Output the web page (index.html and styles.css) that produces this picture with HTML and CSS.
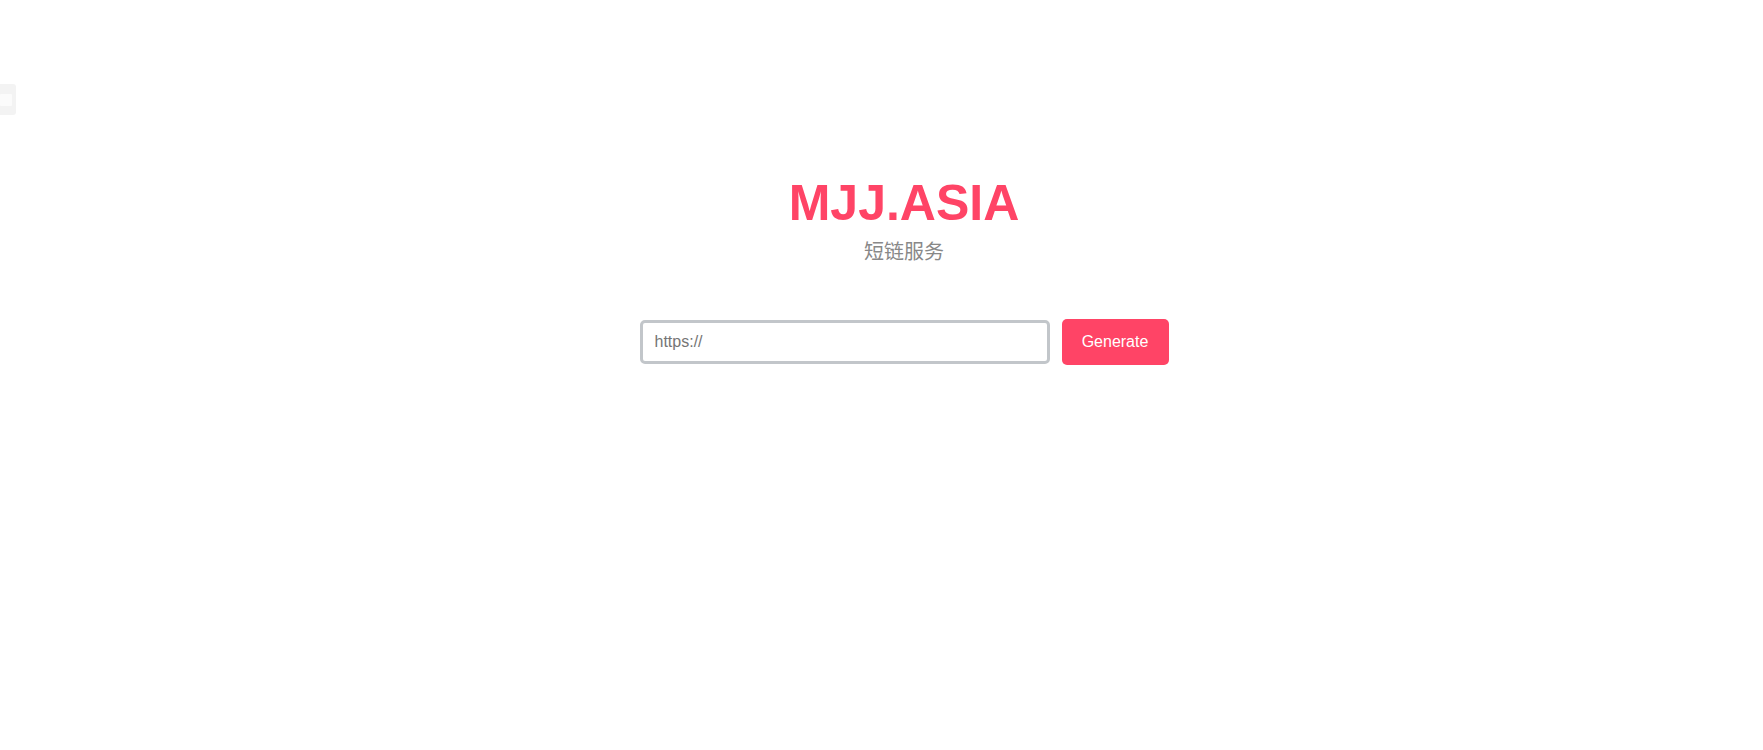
FILE: index.html
```html
<!DOCTYPE html>
<html lang="zh">
<head>
<meta charset="utf-8">
<title>MJJ.ASIA 短链服务</title>
<link rel="stylesheet" href="styles.css">
</head>
<body>
<div class="side-toggle"><span class="side-toggle-inner"></span></div>
<main class="page">
  <header class="brand">
    <h1 class="brand-title">MJJ.ASIA</h1>
    <p class="brand-sub">短链服务</p>
  </header>
  <form class="shorten">
    <input class="shorten-input" type="text" placeholder="https://">
    <button class="shorten-btn" type="button">Generate</button>
  </form>
</main>
</body>
</html>
```

FILE: styles.css
```css
html, body {
  margin: 0;
  padding: 0;
  background: #ffffff;
}
body {
  font-family: "Liberation Sans", Arial, sans-serif;
}
.side-toggle {
  position: fixed;
  left: 0;
  top: 84px;
  width: 16px;
  height: 31px;
  background: #f3f3f3;
  border-radius: 0 3px 3px 0;
  display: flex;
  align-items: center;
}
.side-toggle-inner {
  display: block;
  width: 12px;
  height: 12px;
  background: #fbfbfb;
  border-radius: 1px;
}
.page {
  display: flex;
  flex-direction: column;
  align-items: center;
  padding-top: 174px;
  padding-left: 45px;
}
.brand {
  display: flex;
  flex-direction: column;
  align-items: center;
}
.brand-title {
  margin: 0;
  font-family: "Liberation Sans", Arial, sans-serif;
  font-weight: 700;
  font-size: 50px;
  line-height: 58px;
  color: #ff4466;
}
.brand-sub {
  margin: 6px 0 0;
  font-family: "Noto Sans CJK SC", sans-serif;
  font-size: 20px;
  line-height: 26px;
  color: #888888;
}
.shorten {
  display: flex;
  align-items: center;
  gap: 12px;
  margin-top: 55px;
}
.shorten-input {
  box-sizing: border-box;
  width: 410px;
  height: 44px;
  border: 3px solid #c2c6ca;
  border-radius: 5px;
  padding: 0 12px;
  font-family: "Liberation Sans", Arial, sans-serif;
  font-size: 16px;
  color: #333;
  outline: none;
}
.shorten-input::placeholder {
  color: #757575;
}
.shorten-btn {
  box-sizing: border-box;
  width: 107px;
  height: 46px;
  border: none;
  border-radius: 5px;
  background: #ff4466;
  color: #ffffff;
  font-family: "Liberation Sans", Arial, sans-serif;
  font-size: 16px;
  cursor: pointer;
}
```
